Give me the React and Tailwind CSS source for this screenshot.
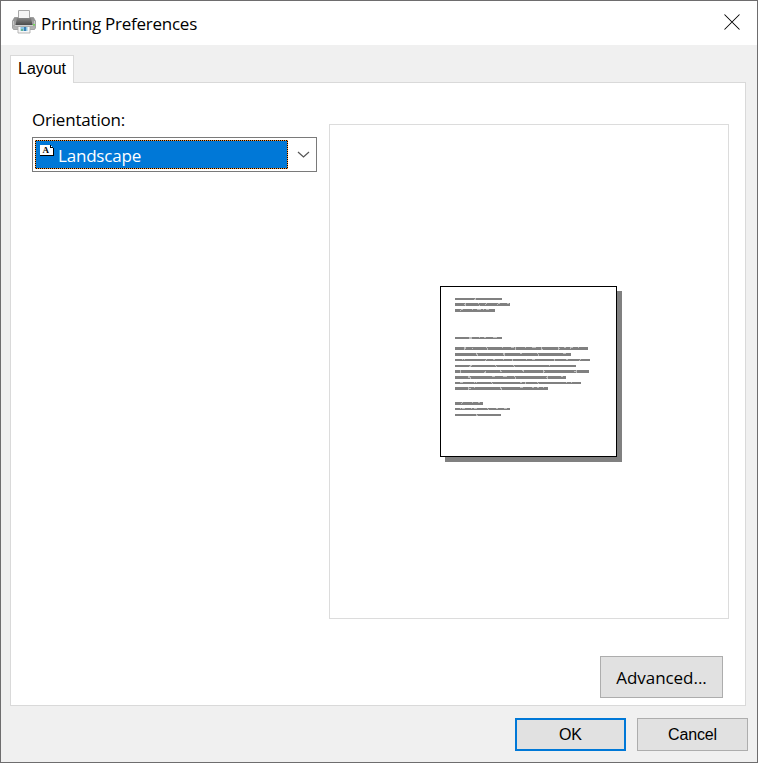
import React from "react";

// Each line of the sample letter: y, width, height, then light specks as [x, y, w, h].
const LINES = [
  { y: 12, w: 47, h: 2, s: [[20, 0, 1, 1], [19, 1, 2, 1]] },
  { y: 17, w: 55, h: 3, s: [[10, 0, 1, 3], [9, 1, 1, 1], [23, 0, 1, 1], [24, 2, 1, 1], [31, 0, 1, 1], [30, 1, 1, 1], [42, 1, 1, 1], [43, 0, 2, 1], [52, 0, 2, 1]] },
  { y: 23, w: 40, h: 3, s: [[6, 0, 2, 1], [5, 1, 1, 1], [17, 0, 1, 1], [22, 0, 4, 1], [28, 0, 1, 1], [31, 0, 3, 1]] },
  { y: 51, w: 47, h: 2, s: [[14, 0, 3, 2], [24, 0, 1, 1], [29, 0, 2, 1], [38, 0, 4, 1]] },
  { y: 61, w: 133, h: 3, s: [[9, 0, 2, 2], [9, 2, 1, 1], [17, 1, 1, 1], [31, 0, 1, 1], [32, 1, 1, 2], [47, 0, 1, 1], [56, 0, 3, 1], [60, 0, 1, 3], [70, 0, 1, 1], [77, 0, 4, 1], [86, 0, 1, 3], [87, 2, 1, 1], [103, 0, 1, 3], [104, 1, 1, 1], [109, 0, 2, 1], [115, 0, 3, 1], [115, 1, 1, 1], [123, 0, 1, 1]] },
  { y: 67, w: 116, h: 3, s: [[21, 0, 1, 2], [22, 1, 1, 2], [48, 0, 2, 2], [49, 2, 1, 1], [65, 0, 2, 1], [82, 0, 1, 1], [83, 1, 1, 2], [108, 0, 3, 1]] },
  { y: 73, w: 135, h: 2, s: [[7, 0, 1, 1], [9, 0, 1, 1], [30, 1, 1, 1], [31, 0, 1, 1], [38, 0, 2, 1], [48, 0, 1, 1], [57, 0, 1, 2], [71, 0, 1, 1], [77, 0, 3, 1], [99, 0, 1, 2], [111, 0, 2, 1], [124, 1, 1, 1], [125, 0, 1, 1]] },
  { y: 79, w: 121, h: 2, s: [[15, 0, 2, 1], [14, 1, 2, 1], [40, 0, 1, 1], [41, 1, 1, 1], [58, 0, 1, 1], [59, 1, 1, 1], [94, 0, 1, 1]] },
  { y: 84, w: 134, h: 3, s: [[5, 0, 1, 3], [30, 1, 1, 1], [29, 2, 2, 1], [45, 0, 1, 2], [46, 1, 1, 1], [67, 0, 2, 1], [68, 1, 1, 1], [88, 0, 1, 3], [89, 1, 1, 1], [119, 1, 2, 1], [121, 0, 1, 3]] },
  { y: 90, w: 111, h: 3, s: [[13, 0, 2, 2], [15, 1, 1, 2], [37, 0, 3, 1], [48, 0, 4, 1], [59, 0, 1, 1], [60, 1, 1, 2], [92, 0, 1, 3], [91, 1, 1, 1], [106, 0, 2, 1]] },
  { y: 96, w: 126, h: 2, s: [[5, 0, 3, 1], [19, 0, 1, 1], [21, 0, 1, 1], [36, 0, 1, 1], [37, 1, 1, 1], [65, 0, 2, 1], [70, 0, 1, 2], [82, 0, 1, 1], [83, 1, 1, 1], [111, 0, 1, 1], [116, 0, 1, 1]] },
  { y: 101, w: 93, h: 3, s: [[13, 0, 1, 3], [14, 1, 2, 1], [19, 0, 1, 1], [45, 0, 1, 2], [46, 1, 1, 2], [65, 0, 3, 1], [77, 0, 2, 1], [82, 0, 2, 1], [88, 0, 1, 1]] },
  { y: 116, w: 28, h: 3, s: [[7, 0, 1, 1], [6, 1, 1, 1], [17, 0, 1, 1], [23, 0, 2, 1]] },
  { y: 122, w: 55, h: 2, s: [[5, 0, 1, 1], [7, 0, 3, 1], [16, 0, 1, 1], [19, 0, 3, 1], [32, 0, 1, 1], [33, 1, 1, 1], [41, 0, 2, 1], [49, 0, 3, 1]] },
  { y: 128, w: 46, h: 2, s: [[21, 0, 1, 2], [22, 1, 1, 1]] },
];

function PrinterIcon() {
  return (
    <svg width="24" height="24" viewBox="0 0 24 24" className="shrink-0">
      <defs>
        <linearGradient id="body" x1="0" y1="0" x2="0" y2="1">
          <stop offset="0" stopColor="#8e8e8e" />
          <stop offset="1" stopColor="#b8b8b8" />
        </linearGradient>
        <linearGradient id="slot" x1="0" y1="0" x2="0" y2="1">
          <stop offset="0" stopColor="#858585" />
          <stop offset="1" stopColor="#4b4b4b" />
        </linearGradient>
      </defs>
      <path d="M2.500 7.500h19l2 3.500v7l-1 1.500h-21l-1-1.500V11z" fill="url(#body)" stroke="#8c8c8c" strokeWidth=".7" />
      <path d="M6.500.5h11v8h-11z" fill="#f4f4f4" stroke="#a8a8a8" />
      <path d="M5 8h14l1.500 7h-17z" fill="url(#slot)" />
      <path d="M1.500 11v4M22.500 11v3" stroke="#c8c8c8" strokeWidth="1" />
      <path d="M21 14h2v1.500h-2z" fill="#72d957" />
      <path d="M3 15.500h18" stroke="#d0d0d0" />
      <path d="M6 16.500h12v6.500h-12z" fill="#f7f7f7" stroke="#a5a5a5" strokeWidth=".8" />
      <path d="M8.500 17h7v4h-7z" fill="#8bc5e2" />
      <path d="M12 17h2v4H12z" fill="#3b7fb5" />
      <path d="M9 19h2v2H9z" fill="#65b492" />
    </svg>
  );
}

function PageIcon() {
  return (
    <svg width="16" height="13" viewBox="0 0 16 13" shapeRendering="crispEdges" className="mt-[3px] ml-[3px] shrink-0">
      <path d="M1 1h11v1h1v1h1v1h1v8H1z" fill="#000" />
      <path d="M1 1h10v3h3v7H1z" fill="#fff" />
      <path d="M12 2h1v1h-1z" fill="#fff" />
      <text x="3.500" y="9" fontSize="9" fontWeight="bold" fontFamily="Liberation Serif, serif">A</text>
    </svg>
  );
}

function PagePreview() {
  return (
    <svg width="182" height="176" viewBox="0 0 182 176" shapeRendering="crispEdges">
      <rect x="5" y="5" width="177" height="171" fill="#808080" />
      <rect x=".5" y=".5" width="176" height="170" fill="#fff" stroke="#000" />
      {LINES.map((line) => (
        <g key={line.y} transform={`translate(15 ${line.y})`}>
          <rect width={line.w} height={line.h} fill="#808080" />
          {line.s.map(([x, y, w, h], i) => (
            <rect key={i} x={x} y={y} width={w} height={h} fill="#c0c0c0" />
          ))}
        </g>
      ))}
    </svg>
  );
}

export default function App() {
  return (
    <div className="flex h-[763px] w-[758px] flex-col border border-[#6e6d6e] bg-[#f0f0f0] font-['Open_Sans',sans-serif] text-[17px] leading-6 text-black">
      <header className="flex h-11 shrink-0 justify-between bg-white pl-[11px]">
        <div className="flex pt-[9px]">
          <PrinterIcon />
          <h1 className="ml-[5px] mt-[2px] whitespace-nowrap tracking-[-0.25px]">Printing Preferences</h1>
        </div>
        <button aria-label="Close" className="mt-[13px] mr-[17px] h-4 w-4">
          <svg width="16" height="16" viewBox="0 0 16 16"><path d="M.5.500l15 15M15.500.5l-15 15" stroke="#000" strokeWidth="1.050" /></svg>
        </button>
      </header>
      <div className="mt-[10px] ml-[9px] h-[27px] w-16 shrink-0 border border-b-0 border-[#d9d9d9] bg-white">
        <div className="relative z-10 h-[27px] bg-white pl-[7px] pt-px font-['Liberation_Sans',sans-serif] text-[16px]">Layout</div>
      </div>
      <main className="ml-[9px] flex h-[624px] w-[736px] shrink-0 flex-col border border-[#d9d9d9] bg-white">
        <div className="flex">
          <section className="ml-[21px] w-[285px] pt-[25px]">
            <label className="block h-[29px] tracking-[-0.2px]">Orientation:</label>
            <div className="flex h-[35px] border border-[#7a7a7a] p-[2px]">
              <div className="h-[29px] w-[253px] bg-[repeating-conic-gradient(#000_0%_25%,#ff9838_0%_50%)] bg-[length:2px_2px] p-px text-white">
                <div className="flex h-[27px] bg-[#0078d7]">
                  <PageIcon />
                  <span className="ml-[3px] mt-[3px] tracking-[-0.2px]">Landscape</span>
                </div>
              </div>
              <svg width="13" height="8" viewBox="0 0 13 8" className="mt-[11px] ml-[9px]"><path d="M1 1l5.500 5L12 1" fill="none" stroke="#555" strokeWidth="1.200" /></svg>
            </div>
          </section>
          <section className="ml-[12px] mt-[41px] h-[495px] w-[400px] border border-[#dcdcdc] pl-[110px] pt-[161px]">
            <PagePreview />
          </section>
        </div>
        <button className="mt-[37px] mr-[22px] h-[42px] w-[123px] self-end border border-[#adadad] bg-[#e1e1e1] pt-px tracking-[-0.05px]">Advanced...</button>
      </main>
      <footer className="mt-[12px] mr-[9px] flex justify-end gap-[11px] font-['Liberation_Sans',sans-serif] text-[16px] tracking-[-0.15px]">
        <button className="h-[33px] w-[111px] border-2 border-[#0078d7] bg-[#e1e1e1]">OK</button>
        <button className="h-[33px] w-[111px] border border-[#adadad] bg-[#e1e1e1]">Cancel</button>
      </footer>
    </div>
  );
}
